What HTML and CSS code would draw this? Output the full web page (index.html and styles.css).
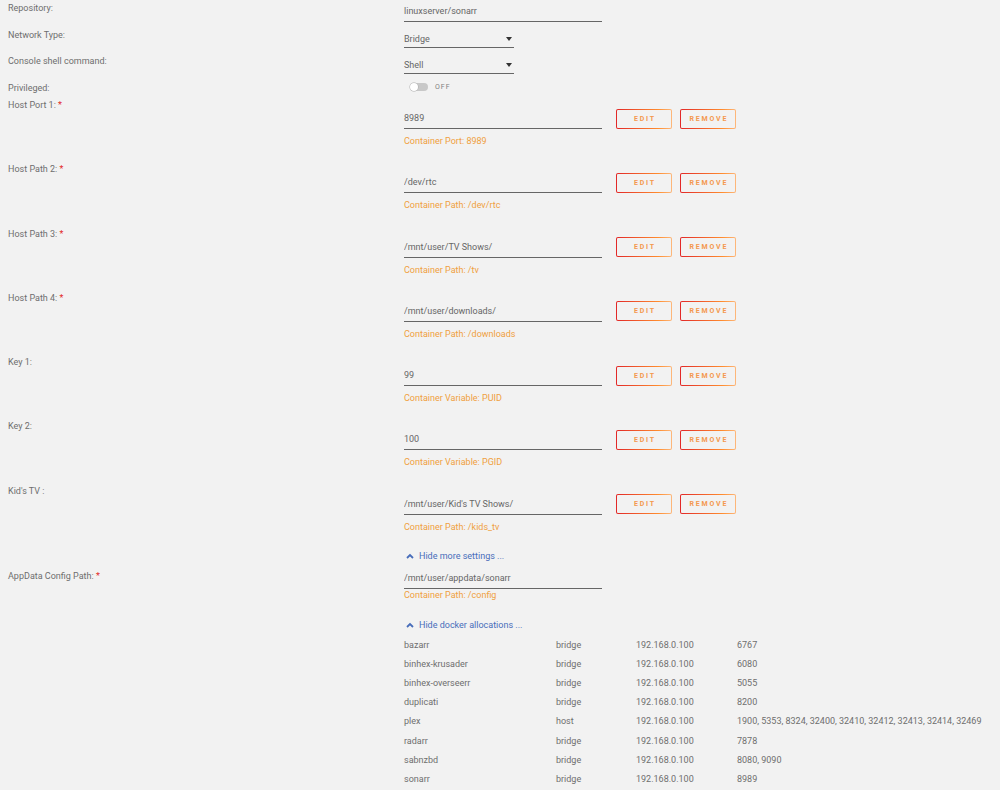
FILE: index.html
```html
<!DOCTYPE html>
<html lang="en">
<head>
    <meta charset="UTF-8">
    <meta name="viewport" content="width=device-width, initial-scale=1.0">
    <title>Update Container</title>
    <link rel="stylesheet" href="styles.css">
</head>
<body>
    <div class="form">
        <div class="row row-first">
            <div class="label">Repository:</div>
            <div class="field"><input class="text-input" type="text" value="linuxserver/sonarr"></div>
        </div>
        <div class="row row-select">
            <div class="label">Network Type:</div>
            <div class="field">
                <span class="select-wrap"><select><option>Bridge</option><option>Host</option><option>None</option></select></span>
            </div>
        </div>
        <div class="row row-select">
            <div class="label">Console shell command:</div>
            <div class="field">
                <span class="select-wrap"><select><option>Shell</option><option>Bash</option></select></span>
            </div>
        </div>
        <div class="row row-switch">
            <div class="label">Privileged:</div>
            <div class="field">
                <label class="switch"><span class="track"></span><span class="switch-text">OFF</span></label>
            </div>
        </div>

        <div class="row config">
            <div class="label">Host Port 1: <span class="req">*</span></div>
            <div class="field">
                <div class="control">
                    <input class="text-input" type="text" value="8989">
                    <button class="btn"><span>EDIT</span></button>
                    <button class="btn"><span>REMOVE</span></button>
                </div>
                <div class="desc">Container Port: 8989</div>
            </div>
        </div>
        <div class="row config">
            <div class="label">Host Path 2: <span class="req">*</span></div>
            <div class="field">
                <div class="control">
                    <input class="text-input" type="text" value="/dev/rtc">
                    <button class="btn"><span>EDIT</span></button>
                    <button class="btn"><span>REMOVE</span></button>
                </div>
                <div class="desc">Container Path: /dev/rtc</div>
            </div>
        </div>
        <div class="row config">
            <div class="label">Host Path 3: <span class="req">*</span></div>
            <div class="field">
                <div class="control">
                    <input class="text-input" type="text" value="/mnt/user/TV Shows/">
                    <button class="btn"><span>EDIT</span></button>
                    <button class="btn"><span>REMOVE</span></button>
                </div>
                <div class="desc">Container Path: /tv</div>
            </div>
        </div>
        <div class="row config">
            <div class="label">Host Path 4: <span class="req">*</span></div>
            <div class="field">
                <div class="control">
                    <input class="text-input" type="text" value="/mnt/user/downloads/">
                    <button class="btn"><span>EDIT</span></button>
                    <button class="btn"><span>REMOVE</span></button>
                </div>
                <div class="desc">Container Path: /downloads</div>
            </div>
        </div>
        <div class="row config">
            <div class="label">Key 1:</div>
            <div class="field">
                <div class="control">
                    <input class="text-input" type="text" value="99">
                    <button class="btn"><span>EDIT</span></button>
                    <button class="btn"><span>REMOVE</span></button>
                </div>
                <div class="desc">Container Variable: PUID</div>
            </div>
        </div>
        <div class="row config">
            <div class="label">Key 2:</div>
            <div class="field">
                <div class="control">
                    <input class="text-input" type="text" value="100">
                    <button class="btn"><span>EDIT</span></button>
                    <button class="btn"><span>REMOVE</span></button>
                </div>
                <div class="desc">Container Variable: PGID</div>
            </div>
        </div>
        <div class="row config">
            <div class="label">Kid's TV :</div>
            <div class="field">
                <div class="control">
                    <input class="text-input" type="text" value="/mnt/user/Kid's TV Shows/">
                    <button class="btn"><span>EDIT</span></button>
                    <button class="btn"><span>REMOVE</span></button>
                </div>
                <div class="desc">Container Path: /kids_tv</div>
            </div>
        </div>

        <a class="toggle-link link-settings" href="#">
            <svg width="8" height="6" viewBox="0 0 8 6"><polyline points="1,5 4,2 7,5" fill="none" stroke="#486dba" stroke-width="1.8"/></svg>
            Hide more settings ...
        </a>

        <div class="row row-appdata">
            <div class="label">AppData Config Path: <span class="req">*</span></div>
            <div class="field">
                <input class="text-input" type="text" value="/mnt/user/appdata/sonarr">
                <div class="desc desc-tight">Container Path: /config</div>
            </div>
        </div>

        <a class="toggle-link link-docker" href="#">
            <svg width="8" height="6" viewBox="0 0 8 6"><polyline points="1,5 4,2 7,5" fill="none" stroke="#486dba" stroke-width="1.8"/></svg>
            Hide docker allocations ...
        </a>

        <table class="allocations">
            <tbody>
                <tr><td>bazarr</td><td>bridge</td><td>192.168.0.100</td><td>6767</td></tr>
                <tr><td>binhex-krusader</td><td>bridge</td><td>192.168.0.100</td><td>6080</td></tr>
                <tr><td>binhex-overseerr</td><td>bridge</td><td>192.168.0.100</td><td>5055</td></tr>
                <tr><td>duplicati</td><td>bridge</td><td>192.168.0.100</td><td>8200</td></tr>
                <tr><td>plex</td><td>host</td><td>192.168.0.100</td><td>1900, 5353, 8324, 32400, 32410, 32412, 32413, 32414, 32469</td></tr>
                <tr><td>radarr</td><td>bridge</td><td>192.168.0.100</td><td>7878</td></tr>
                <tr><td>sabnzbd</td><td>bridge</td><td>192.168.0.100</td><td>8080, 9090</td></tr>
                <tr><td>sonarr</td><td>bridge</td><td>192.168.0.100</td><td>8989</td></tr>
            </tbody>
        </table>
    </div>
</body>
</html>
```

FILE: styles.css
```css
html {
    overflow: hidden;
}
body {
    margin: 0;
    background-color: #f2f2f2;
    font-family: Roboto, "Liberation Sans", sans-serif;
    font-size: 9px;
    color: #6e6e6e;
}
.form {
    padding: 0 8px;
}
.row {
    display: flex;
}
.label {
    width: 396px;
    flex: none;
    line-height: 16px;
}
.req {
    color: #e22828;
}
.field {
    flex: 1;
}

/* inputs */
.text-input {
    display: block;
    box-sizing: content-box;
    width: 198px;
    height: 20px;
    padding: 0;
    border: none;
    border-bottom: 1px solid #666;
    background: transparent;
    font: inherit;
    color: #666;
    outline: none;
}
.select-wrap {
    position: relative;
    display: block;
    width: 110px;
}
.select-wrap select {
    -webkit-appearance: none;
    appearance: none;
    display: block;
    width: 110px;
    height: 18px;
    padding: 0;
    border: none;
    border-bottom: 1px solid #666;
    border-radius: 0;
    background: transparent;
    font: inherit;
    color: #666;
    outline: none;
}
.select-wrap::after {
    content: "";
    position: absolute;
    right: 2px;
    top: 7px;
    border-left: 3px solid transparent;
    border-right: 3px solid transparent;
    border-top: 4px solid #333;
}

/* top rows */
.row-first .field {
    padding-top: 1px;
}
.row-first {
    height: 22px;
}
.row-select {
    height: 26px;
}
.row-select .label {
    padding-top: 5px;
}
.row-select .field {
    padding-top: 8px;
}
.row-switch {
    height: 23px;
}
.row-switch .label {
    padding-top: 6px;
}
.row-switch .field {
    padding-top: 9px;
}
.switch {
    display: flex;
    align-items: center;
    gap: 7px;
    padding-left: 6px;
}
.track {
    position: relative;
    width: 18px;
    height: 8px;
    border-radius: 4px;
    background-color: #c8c8c8;
}
.track::before {
    content: "";
    position: absolute;
    left: 0;
    top: 0;
    width: 8px;
    height: 8px;
    border-radius: 50%;
    background-color: #fff;
    box-shadow: 0 0 0 0.5px #aaa;
}
.switch-text {
    font-size: 7px;
    letter-spacing: 1px;
    color: #808080;
    line-height: 8px;
}

/* port / path rows */
.config {
    height: 64.3px;
}
.config .field {
    padding-top: 11px;
}
.control {
    display: flex;
    align-items: center;
}
.btn {
    box-sizing: border-box;
    width: 56px;
    height: 20px;
    margin-left: 8px;
    padding: 0;
    border: 1px solid transparent;
    border-radius: 2px;
    background: linear-gradient(#f2f2f2, #f2f2f2) padding-box,
                linear-gradient(90deg, #e22828, #ff8c2f 75%, #fdb87c) border-box;
    font-family: Roboto, "Liberation Sans", sans-serif;
    font-size: 7px;
    font-weight: bold;
    letter-spacing: 1.8px;
    cursor: pointer;
}
.control .text-input + .btn {
    margin-left: 14px;
}
.btn span {
    margin-right: -1.8px;
    color: #f4984e;
}
.desc {
    margin-top: 4px;
    line-height: 16px;
    color: #f0a040;
}
.desc-tight {
    margin-top: 0;
    line-height: 12px;
}

/* links */
.toggle-link {
    display: flex;
    align-items: center;
    gap: 5px;
    margin-left: 398px;
    line-height: 16px;
    color: #486dba;
    text-decoration: none;
}
.link-settings {
    margin-top: 1px;
}
.row-appdata {
    margin-top: 4px;
}
.link-docker {
    margin-top: 16px;
}

/* docker allocations */
.allocations {
    margin-left: 396px;
    margin-top: 2px;
    border-collapse: collapse;
    color: #6e6e6e;
}
.allocations td {
    padding: 0;
    height: 19.2px;
    white-space: nowrap;
}
.allocations td:nth-child(1) {
    width: 152px;
}
.allocations td:nth-child(2) {
    width: 80px;
}
.allocations td:nth-child(3) {
    width: 101px;
}
```
